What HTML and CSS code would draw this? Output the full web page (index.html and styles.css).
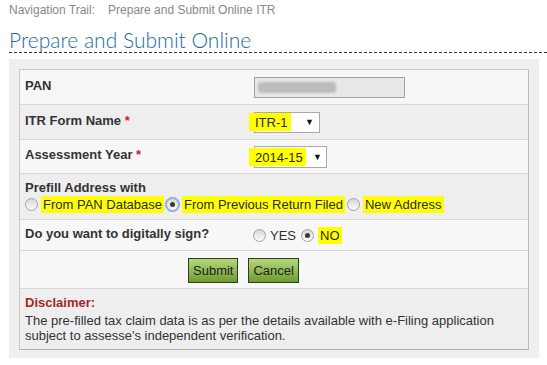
FILE: index.html
```html
<!DOCTYPE html>
<html lang="en">
<head>
  <meta charset="UTF-8">
  <title>Prepare and Submit Online ITR</title>
  <link rel="stylesheet" href="styles.css">
</head>
<body>
  <div class="trail">Navigation Trail:<span class="trail-page">Prepare and Submit Online ITR</span></div>
  <h1 class="title">Prepare and Submit Online</h1>

  <div class="panel">
    <div class="form">
      <div class="row light h-pan">
        <div class="label">PAN</div>
        <div class="pan-box"><span class="smudge"></span></div>
      </div>

      <div class="row dark h-itr">
        <div class="label">ITR Form Name <span class="req">*</span></div>
        <div class="select sel-itr"><span class="mark">ITR-1</span><span class="arrow">&#9660;</span></div>
      </div>

      <div class="row light h-ay">
        <div class="label">Assessment Year <span class="req">*</span></div>
        <div class="select sel-ay"><span class="mark">2014-15</span><span class="arrow">&#9660;</span></div>
      </div>

      <div class="row dark block h-prefill">
        <div class="label">Prefill Address with</div>
        <div class="options">
          <span class="opt"><span class="radio"></span><span class="mark">From PAN Database</span></span>
          <span class="opt"><span class="radio checked focus"></span><span class="mark">From Previous Return Filed</span></span>
          <span class="opt"><span class="radio"></span><span class="mark">New Address</span></span>
        </div>
      </div>

      <div class="row light h-sign">
        <div class="label">Do you want to digitally sign?</div>
        <div class="options">
          <span class="opt"><span class="radio"></span><span class="plain">YES</span></span>
          <span class="opt"><span class="radio checked"></span><span class="mark">NO</span></span>
        </div>
      </div>

      <div class="row light h-buttons">
        <div class="buttons">
          <button type="button" class="btn">Submit</button>
          <button type="button" class="btn">Cancel</button>
        </div>
      </div>

      <div class="row dark block h-disclaimer">
        <div class="disclaimer-title">Disclaimer:</div>
        <p class="disclaimer">The pre-filled tax claim data is as per the details available with e-Filing application subject to assesse's independent verification.</p>
      </div>
    </div>
  </div>
</body>
</html>
```

FILE: styles.css
```css
body {
  margin: 0;
  font-family: "Liberation Sans", Arial, sans-serif;
  font-size: 13px;
  color: #333;
  background: #fff;
}

.trail {
  padding: 3px 9px 0;
  font-size: 12px;
  line-height: 14px;
  color: #888;
}

.trail-page {
  margin-left: 13px;
}

.title {
  margin: 11px 0 0 9px;
  font-family: Lato, "Open Sans", sans-serif;
  font-weight: 300;
  font-size: 21px;
  line-height: 24px;
  color: #1d6aa5;
  border-bottom: 1px dashed #333;
}

.panel {
  margin: 6px 0 0 9px;
  width: 510px;
  padding: 10px 10px 8px;
  background: #efefef;
}

.form {
  border: 1px solid #c8c8c8;
  border-bottom-color: #b0b0b0;
  border-right-color: #bdbdbd;
}

.row {
  display: flex;
  align-items: center;
  padding: 0 5px;
  border-top: 1px solid #d8d8d8;
}

.row:first-child {
  border-top: none;
}

.row.block {
  display: block;
}

.light { background: #f7f7f7; }
.dark { background: #eeeeee; }

.h-pan { height: 34px; }
.h-itr { height: 34px; }
.h-ay { height: 33px; }
.h-prefill { height: 46px; padding-top: 6px; box-sizing: border-box; }
.h-sign { height: 30px; }
.h-buttons { height: 37px; }
.h-disclaimer { height: 61px; padding-top: 6px; box-sizing: border-box; }

.label {
  width: 228px;
  font-weight: bold;
  line-height: 16px;
  margin-top: -3px;
}

.block .label {
  margin-top: 0;
}

.req {
  color: #e0102a;
}

.pan-box {
  width: 149px;
  height: 19px;
  margin-left: 1px;
  border: 1px solid #a0a0a0;
  background: #e8e8e8;
  display: flex;
  align-items: center;
}

.smudge {
  width: 78px;
  height: 11px;
  margin-left: 3px;
  background: #bcbcbc;
  border-radius: 3px;
  filter: blur(1px);
}

.select {
  display: flex;
  align-items: center;
  margin-left: 1px;
  border: 1px solid #a9a9a9;
  background: #fff;
  box-sizing: border-box;
}

.sel-itr { width: 66px; height: 21px; }
.sel-ay { width: 73px; height: 22px; }

.select .mark {
  margin-left: -6px;
  padding: 2px 3px 1px 6px;
  line-height: 15px;
}

.sel-itr .arrow { margin-left: auto; margin-right: 5px; }
.sel-ay .arrow { margin-left: auto; margin-right: 4px; }

.arrow {
  font-size: 9px;
  color: #111;
}

.mark {
  background: #ffff00;
  color: #2a2a2a;
  padding: 1px 2px;
}

.options {
  display: flex;
  align-items: center;
  line-height: 15px;
}

.opt {
  display: inline-flex;
  align-items: center;
  gap: 3px;
  margin-right: 2px;
}

.h-sign .opt {
  gap: 4px;
  margin-right: 5px;
}

.plain {
  padding: 1px 0;
}

.radio {
  width: 11px;
  height: 11px;
  border: 1px solid #a3a3a3;
  border-radius: 50%;
  background: linear-gradient(#d8d8d8, #fafafa);
  box-sizing: content-box;
  display: inline-flex;
  align-items: center;
  justify-content: center;
}

.radio.checked::after {
  content: "";
  width: 5px;
  height: 5px;
  border-radius: 50%;
  background: #3a3a3a;
}

.radio.focus {
  outline: 1px solid #8fb4e6;
  outline-offset: 0;
  border-radius: 50%;
  box-shadow: 0 0 0 1px #8fb4e6;
}

.buttons {
  display: flex;
  gap: 10px;
  margin-left: 163px;
  margin-top: 2px;
}

.btn {
  height: 25px;
  padding: 0 4px;
  font-family: "Liberation Sans", Arial, sans-serif;
  font-size: 13px;
  color: #1e1e1e;
  border: 1px solid #2f3d1c;
  background: linear-gradient(#b4d97c, #6f9b30);
  cursor: pointer;
}

.disclaimer-title {
  font-weight: bold;
  color: #a1282a;
  line-height: 16px;
}

.disclaimer {
  margin: 2px 0 0;
  line-height: 15px;
}
```
